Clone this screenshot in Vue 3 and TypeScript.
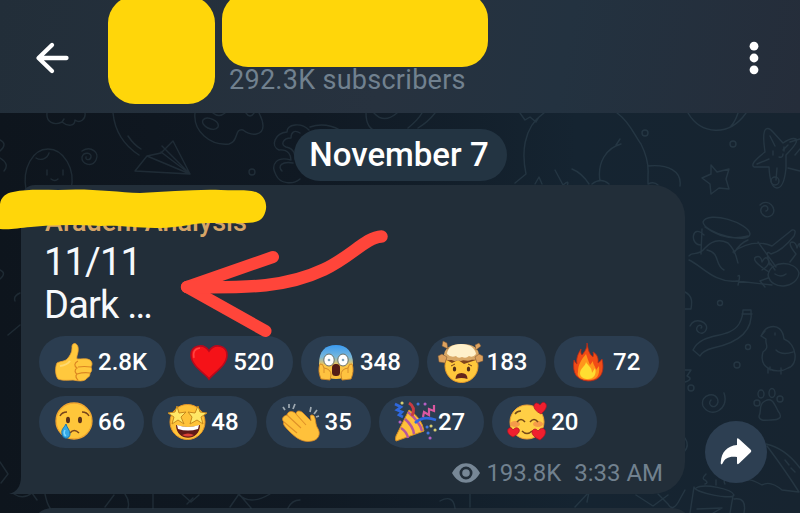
<script setup lang="ts">
interface Reaction {
  kind: string
  count: string
}

const reactionRows: Reaction[][] = [
  [
    { kind: 'thumb', count: '2.8K' },
    { kind: 'heart', count: '520' },
    { kind: 'scream', count: '348' },
    { kind: 'mindblown', count: '183' },
    { kind: 'fire', count: '72' },
  ],
  [
    { kind: 'cry', count: '66' },
    { kind: 'starstruck', count: '48' },
    { kind: 'clap', count: '35' },
    { kind: 'party', count: '27' },
    { kind: 'love', count: '20' },
  ],
]
</script>

<template>
  <div class="screen">
    <header class="topbar">
      <svg class="back" viewBox="0 0 36 34">
        <path d="M31.500 17H4M17 4 3.500 17 17 30" />
      </svg>
      <div class="avatar"></div>
      <div class="channel">
        <div class="channel-name"></div>
        <div class="subs">292.3K subscribers</div>
      </div>
      <svg class="menu" viewBox="0 0 12 34">
        <circle cx="6" cy="5.200" r="4.400" /><circle cx="6" cy="17" r="4.400" /><circle cx="6" cy="28.800" r="4.400" />
      </svg>
    </header>

    <main class="chat">
      <svg class="wallpaper" viewBox="0 113 800 400">
        <!-- cloud, egg and spiral -->
        <path d="M47 113c-1 9 7 13 15 9 6 5 13 4 13-2 5 4 11-1 10-7M62 122l2-3" />
        <path d="M26 190c-4-22 7-41 22-41s28 19 23 41M36 158c5 3 11 1 13-5M47 170v5M63 170v5M51 179q4 3 7 0" />
        <path d="M82 151c9-6 18 2 14 9-4 8-15 4-14-3 2-6 10-4 9 0-1 4-6 3-5 0" />
        <path d="M0 140q8 4 0 11M0 158q10 6 4 13" />
        <!-- balloon and paper plane -->
        <path d="M113 113c2 20 12 33 26 42M128 136q6 9 13 13M135 171l12-15 14-3 12-12 17 33zM147 156l43 18-29-22M162 146l28 28" />
        <!-- palette -->
        <path d="M195 113c-2 18 15 33 34 31 10-2 5-16 14-14 9 7 20 5 20-4 0-6-2-9-4-13M203 120c4-5 17 1 15 7-4 6-18-1-15-7M213 113q6 5 12 0M246 113q4 6 8 0" />
        <circle cx="252" cy="172" r="3" />
        <path d="M309 130c-8-8-22-6-22 2-12 1-17 14-8 18 10-1 12 6 12 10-14-4-21 4-15 15 4 9 17 10 24 4M300 133c-6-4-9 0-9 5-8 0-11 7-5 9 9 2 9 8 9 12M293 163c-11-2-16 3-11 8M310 127q15-5 30 3" />
        <path d="M366 113c0 10 3 16 10 18M374 113c8 9 16 6 23 0M418 128q10-6 17-15M408 128q10-8 14-15" />
        <!-- whale -->
        <path d="M520 113l5 7 5-3 6 5 3-5 5-4M544 113c-22 15-22 42-18 61l-11 9M617 113c12 8 18 23 24 31 5 10 8 19 7 31v9M535 184l4-7 3 7M555 170l8 15q7-6 4 1M572 169q10 4 17 15M592 184q9-7 17 0M621 144c-15 4-24 19-21 37M616 145l4-6M648 166c20-2 34 5 32 20M648 184q6-3 10 1" />
        <circle cx="645" cy="133" r="3" /><circle cx="733" cy="144" r="3" />
        <path d="M688 113c13 22 41 24 58 0M738 113q-3 9-7 13" />
        <!-- star fish and small star -->
        <path d="M766 129q3-2 7 3l10 11q9-6 13-4 3 3-10 16l0 13q-2 20-9 20-7 0-8-21l-15 0q-5-3 11-15-3-20 1-23zM770 136l5 10M788 145l-5 5M757 164l12-5M776 180l1-12M790 142l10-3M788 168l12 3M795 155l5-6" />
        <path d="M773 151v4M784 147v4M779 157q4 1 4-3" />
        <path d="M711 165l6 7 12-3-3 10 3 10-10-1-8 6-1-10-8-6 9-4z" />
        <circle cx="775" cy="181" r="4" />
        <!-- right spirals -->
        <path d="M760 205c8-8 18 4 12 10-6 5-14-2-10-8 5-4 8 3 4 4M690 326c4-10 20-4 16 4-3 7-13 1-8-4 3-2 5 1 3 2M724 393c6 17-14 26-21 13-4-12 15-16 15-4-2 9-12 3-7-2" />
        <!-- drum and dog -->
        <path d="M703 222c5-12 46 1 47 12-1 11-46-1-47-12M705 227q20 15 43 9M702 229l-1 25M704 235c-12-12-15 10-3 10M748 240q-8 3-14 13M689 256c3-5 9 1 16-8 8-9 17-8 23-5 9 9 8 15 10 20M689 260c12 5 26 24 48 21l35 4M707 250c14 3 7 15 17 20M733 252q20-14 39-6l20-16q5-1 2 6-12 15-23 18-7-6-1 11M758 242l18 25M738 276q3-3 0 9" />
        <path d="M768 275c3-16 28-14 31-2-2 16-28 18-31 2M775 270l-5-7M769 272q-19-12-13-15 5-2 6 5 4-8 7-1 0 5-7 9M790 262l6-8q-9-11-4-12 4 0 5 6 3-8 3-1M775 274q6 4 11 0M768 278l-8 3 5 6" />
        <!-- ribbon -->
        <path d="M743 310l8 0c3 25-19 34-38 38-8 2-11 4-13 8l-7-6c9-19 36-10 46-26q4-7 4-14zM742 314h10" />
        <circle cx="720" cy="303" r="2.500" /><circle cx="748" cy="347" r="2.500" /><circle cx="737" cy="365" r="3" /><circle cx="691" cy="388" r="3" />
        <!-- chick -->
        <path d="M765 331l-4 5 5 3c-1 6 4 8-3 13-5 17 14 23 25 16 11-3 9-24-4-29-1-9-6-14-14-12-6 1-7 6-9 9M776 350c6 6 14 3 17 2M770 370v-3M768 368v5M781 368v6M775 333v2" />
        <!-- paw -->
        <path d="M765 401c-7 4-3 10-6 15 0 6 8 4 12 4 9 0 12-3 7-9-4-8-6-14-13-10z" />
        <circle cx="757" cy="403" r="3" /><ellipse cx="761" cy="394" rx="3" ry="4" /><ellipse cx="772" cy="393" rx="3" ry="4.500" /><circle cx="780" cy="399" r="3" />
        <path d="M685 292c8 4 7 11 6 17h-6M685 370h6l-4 6q7 3-2 6M685 438q5 8-1 14M685 490l-5 9q-7 14-12 5l-10-10" />
        <!-- umbrella -->
        <path d="M766 444q19 4 34 24M767 446q18 24 32 46l-17-2q-12-10-20-5-11-6-14-5-10-5-14-4M785 460l4 5M791 468l4 4" />
        <!-- mug -->
        <path d="M696 488c8-5 36 1 38 7-2 5-39-2-40-8l-4 26M733 496l-3 17M734 499q13-2 10 14M697 509l25-1-9 5M706 474q-5 5-1 6 4 3 0 4M716 480v5M726 477q-3 4-1 7" />
        <!-- left and bottom edges -->
        <path d="M0 270q7 3 0 9M20 293q-7 3-5 8M8 335l12-10M0 462l8 12-7 9M14 494q9 6 18-1l5 7M45 494q2 10 5 14M125 494q5 7 3 14M153 494v14M105 507l9-12M182 494l9 8 8-7M193 498l-6 6M230 507l9-13 12 14M238 494q12 12 32 0M288 508q4-8 12-8M440 501q13-7 15 7M470 494v13M575 507l14-15-2 10M636 495l17 11 15-11" />
      </svg>

      <div class="date">November 7</div>

      <section class="message">
        <svg class="tail" viewBox="0 0 16 34"><path d="M12 0v16Q12 31 0 34h16V0z" /></svg>
        <div class="author">Aradeni Analysis</div>
        <div class="body">11/11<br />Dark …</div>
        <div class="reactions">
          <div v-for="(row, r) in reactionRows" :key="r" class="row">
            <div v-for="item in row" :key="item.kind" class="chip" :class="item.kind">
              <svg v-if="item.kind === 'thumb'" class="emoji" viewBox="0 0 40 40">
                <path d="M3 21C6 19 11 20 14 16c4-5 4-8 4-12 1-4 5-3 6 1 1 6-2 9-1 12 5 0 10-1 13 1 3 3 2 5 1 7 1 3 1 4-1 6 0 3-1 4-3 5-2 4-9 3-14 2-5 0-10 1-15-1C1 33 1 25 3 21z" fill="#ffc83d" stroke="#eda12e" stroke-width=".8" />
                <path d="M24 19c-4 2-4 5-1 7-3 2-2 5 0 6-2 2-1 4 1 6M24 25q6-1 13 0M23 32q7-2 13-1" fill="none" stroke="#dc8722" stroke-width="1.200" /><path d="M6 24q7-1 10-5" fill="none" stroke="#ffda70" stroke-width="2" />
              </svg>
              <svg v-else-if="item.kind === 'heart'" class="emoji" viewBox="0 0 40 40">
                <path d="M20 37C17 32 2 24 2 13 2 4 14 0 20 9 26 0 38 4 38 13c0 11-14 18-18 24z" fill="#f51218" stroke="#b8091c" stroke-width="1.600" /><path d="M5 16Q3 7 11 6" fill="none" stroke="#ff4440" stroke-width="1.500" />
              </svg>
              <svg v-else-if="item.kind === 'scream'" class="emoji" viewBox="0 0 40 40">
                <defs><linearGradient id="cold" x2="0" y2="1"><stop stop-color="#3a9bf2" /><stop offset=".35" stop-color="#78b7db" /><stop offset=".6" stop-color="#fbc647" /><stop offset="1" stop-color="#fbbc37" /></linearGradient></defs>
                <path d="M3 22C3 9 9 3 20 3s17 7 17 19c0 10-7 15-17 15S3 32 3 22z" fill="url(#cold)" />
                <ellipse cx="13" cy="18" rx="5.200" ry="6" fill="#fff" stroke="#6a7169" /><ellipse cx="27" cy="18" rx="5.200" ry="6" fill="#fff" stroke="#6a7169" /><circle cx="13" cy="18" r="1.300" fill="#7fa3b8" /><circle cx="27" cy="18" r="1.300" fill="#7fa3b8" />
                <rect x="16" y="22" width="8" height="12" rx="3.500" fill="#551c16" />
                <path d="M4 22q3-1 4 4 7 1 7 7l-1 5-9-1c-2-5-3-10-1-15zM36 22q-3-1-4 4-7 1-7 7l1 5 9-1c2-5 3-10 1-15z" fill="#ffc340" stroke="#cf8426" stroke-width=".9" /><path d="M8 26v5M32 26v5" stroke="#dc912b" />
              </svg>
              <svg v-else-if="item.kind === 'mindblown'" class="emoji" viewBox="0 0 40 40">
                <circle cx="19.500" cy="24" r="16.500" fill="#ffc83c" stroke="#e99a28" />
                <path d="M3 17l7 4 6-3 6 4 6-2 9-3-5-6H7z" fill="#80451d" /><path d="M2 16C1 6 9 2 20 2s18 4 17 14c-3 3-6 1-8 2-4 2-7-1-10 1-4-1-6 1-9-1-3 0-5 1-8-2z" fill="#d9a866" /><path d="M5 12Q6 2 19 2q13 0 15 10-3 4-7 2-3 3-7 1-4 2-6-1-5 2-9-2z" fill="#fff1cb" />
                <path d="M5 1l-4-2-1 5 6 3zM33 3l4-2 2 3-5 4zM0 12l-4 2 1 6 6 1 2-6zM37 12l4 2 0 5-6 2-2-6z" fill="#dda25e" stroke="#765131" stroke-width=".5" />
                <ellipse cx="12.500" cy="27" rx="1.700" ry="2.500" fill="#542f19" /><ellipse cx="26.500" cy="27" rx="1.700" ry="2.500" fill="#542f19" /><path d="M9 24l4-2M30 24l-4-2" stroke="#79451e" /><path d="M13.500 37q0-6 6-6t6 6q-6-2-12 0z" fill="#64261b" />
              </svg>
              <svg v-else-if="item.kind === 'fire'" class="emoji" viewBox="0 0 40 40">
                <path d="M18 1c0 5-1 7-5 12-2-2-1-5-1-6-3 5-5 9-4 15-2-1-2-3-3-4-2 14 3 20 14 21 13 0 17-9 14-22-1 1-2 3-4 4 1-7-3-10-5-11 1 2 0 4 0 5-4-3-5-8-6-14z" fill="#f14c16" stroke="#ba2b17" stroke-width=".8" /><path d="M17 12c-5 6-8 11-8 18-2 5 4 8 10 8 9 0 12-4 11-14l-3 4c-1-5-3-5-3-9l-3 4q-2-5-4-11z" fill="#ff951b" /><path d="M17 20c-1 5-5 5-6 11 0 4 4 6 8 6 6 0 9-5 7-11l-3 5c0-6-4-7-6-11z" fill="#ffdd31" />
              </svg>
              <svg v-else-if="item.kind === 'cry'" class="emoji" viewBox="0 0 40 40">
                <circle cx="20" cy="19" r="18" fill="#ffc63a" stroke="#f0a52f" stroke-width="1.300" /><ellipse cx="14" cy="18" rx="2" ry="3.200" fill="#5b3219" /><ellipse cx="26" cy="18" rx="2" ry="3.200" fill="#5b3219" /><path d="M6 14q2-4 7-4M28 10q5 0 7 4M16 31q4-5 9 0" fill="none" stroke="#78451c" stroke-width="1.500" /><path d="M12 22c-2 4-5 5-4 10 1 6 8 5 8 0 0-4-3-6-4-10z" fill="#35a9e6" stroke="#1976ad" /><path d="M11 28q-2 4 1 6" fill="none" stroke="#7bd9ff" stroke-width="1.500" />
              </svg>
              <svg v-else-if="item.kind === 'starstruck'" class="emoji" viewBox="0 0 40 40">
                <circle cx="20.500" cy="20" r="17.500" fill="#ffc339" stroke="#e99726" /><path d="M9 23q12 4 24 0c0 17-24 17-24 0z" fill="#601a18" /><path d="M10 23q11 4 22 0l-1 4q-10 3-20 0z" fill="#fff" /><path d="M15 33q6-3 12 0-6 3-12 0z" fill="#dc4136" />
                <path d="M10 4l2 7 7-1-5 5 3 7-6-4-6 4 2-7-6-4 7-1zM31 4l2 6 7 1-6 4 2 7-6-4-7 4 2-7-4-5 7 1z" fill="#ffe766" stroke="#c8891d" stroke-width="1" />
              </svg>
              <svg v-else-if="item.kind === 'clap'" class="emoji" viewBox="0 0 40 40">
                <path d="M6 13c1-5 7-4 9-1 0-4 5-4 8 0l7 7c0-3-2-6 1-6 4 0 3 8 5 12 5 7 1 13-5 14-9 2-16-3-22-9-4-4-8-8-6-10-3-3-1-6 3-7z" fill="#ffc13b" stroke="#db8924" stroke-width=".8" /><path d="M6 13l14 13M3 20l13 11M15 12l10 11" fill="none" stroke="#df9129" stroke-width="1.100" /><path d="M4 8L2 5M8 6V2M12 7l2-5M29 10l1-5M33 12l3-4M35 15l3-1" stroke="#9faab2" stroke-width="1.700" />
              </svg>
              <svg v-else-if="item.kind === 'party'" class="emoji party-emoji" viewBox="0 0 44 40">
                <path d="M15 8q13 8 15 21L2 39q-1-2 0-5z" fill="#ffc13b" stroke="#d88e25" /><path d="M11 17q8 7 9 15M7 26q6 4 7 10M14 10q12 10 14 19" fill="none" stroke="#b6579c" stroke-width="2.500" /><path d="M1 2l6 3-4 3 5 2-3 3 4 2M21 21q8-8 21-3" fill="none" stroke="#2f68de" stroke-width="2.600" /><path d="M15 1q7 4 3 13" fill="none" stroke="#c93c42" stroke-width="3" /><path d="M29 15l1-5 5 3 0-6 5 2 0-6" fill="none" stroke="#db58a0" stroke-width="2.200" /><g stroke-width="3" stroke-linecap="round"><path d="M8 1h.1M37 24h.1M41 28h.1" stroke="#d6ce73" /><path d="M31 2h.1M6 20h.1M36 36h.1" stroke="#b35fc3" /><path d="M24 2h.1M33 25h.1M34 31h.1" stroke="#3f76de" /></g>
              </svg>
              <svg v-else class="emoji" viewBox="0 0 40 40">
                <circle cx="20" cy="20" r="17" fill="#ffcf45" stroke="#f2a033" /><ellipse cx="8" cy="22" rx="5" ry="3" fill="#f59b49" /><ellipse cx="31" cy="22" rx="5" ry="3" fill="#f59b49" /><path d="M10 20q4-5 8 0M23 20q4-5 8 0M8 12q2-3 6-3M15 29q5 5 10 0" fill="none" stroke="#754a19" stroke-width="1.500" />
                <path d="M34 12q-8-4-7-9 2-4 6 0 3-5 6-1 2 4-5 10zM6 35Q-1 32 1 27q3-3 5 1 3-4 6-1 2 4-6 8zM33 38q-9-4-8-9 3-4 6 0 4-5 7-1 2 5-5 10z" fill="#f01f2e" stroke="#ad1020" stroke-width=".7" />
              </svg>
              <span>{{ item.count }}</span>
            </div>
          </div>
        </div>
        <div class="meta">
          <svg class="eye" viewBox="0 0 28 20"><path fill-rule="evenodd" d="M0 10C7-3 21-3 28 10 21 23 7 23 0 10zM14 3.500a6.500 6.500 0 1 0 0 13 6.500 6.500 0 0 0 0-13z" /><circle cx="14" cy="10" r="3.800" /></svg>
          <span class="views">193.8K</span>
          <span class="time">3:33 AM</span>
        </div>
      </section>
      <div class="next-message"></div>

      <button class="share" aria-label="Share">
        <svg viewBox="0 0 32 28"><path d="M17 1.500Q17-.5 19 1L30.500 11.500Q32 13 30.500 14.500L19 25.500Q17 27 17 25v-6C9 18 5 20 2.500 25.500 1.500 27 .5 26.500.8 24 1.500 14 7 8 17 7z" /></svg>
      </button>
    </main>

    <svg class="marker" viewBox="0 0 800 513">
      <path class="brush" d="M0 204C1 197 6 193 13 192 27 189 42 190 58 190c31-2 57 2 82 3 27-1 55-4 81-3 14 1 29-1 37 3 8 4 11 15 5 24-4 6-12 6-21 6-17 1-31-1-47 1-12 2-24 4-40 4-20 0-36-3-54-2-30-2-52-1-70 1-15 1-24 4-36 1-5-2-8-4-8-7z" />
      <path class="arrow" d="M273 257 187 287 265.500 331" />
      <path class="arrow shaft" d="M381.500 236.500C366 237 351 257 324 269.500 287 287 251 288 187 287" />
    </svg>
  </div>
</template>

<style>
body {
  overflow: hidden;
  background: #111b25;
}
</style>

<style scoped>
.screen {
  position: relative;
  display: flex;
  flex-direction: column;
  width: 800px;
  height: 513px;
  overflow: hidden;
  font-family: Roboto, "Liberation Sans", sans-serif;
}
.topbar {
  box-sizing: border-box;
  display: flex;
  flex: none;
  align-items: flex-start;
  height: 113px;
  padding-left: 35px;
  background: linear-gradient(100deg, #222e39 0%, #27323f 48%, #233240 70%, #252d3a 100%);
}
.back {
  width: 36px;
  height: 34px;
  margin-top: 41px;
  fill: none;
  stroke: #fff;
  stroke-width: 4.300;
  stroke-linecap: round;
  stroke-linejoin: round;
}
.avatar {
  width: 107px;
  height: 108px;
  margin: -4px 0 0 36.500px;
  border-radius: 27px;
  background: #ffd60a;
}
.channel {
  width: 266px;
  margin: -7px 0 0 7px;
}
.channel-name {
  height: 74px;
  border-radius: 26px;
  background: #ffd60a;
}
.subs {
  margin: -3px 0 0 7.500px;
  color: #71818f;
  font-size: 27px;
  line-height: 32px;
  letter-spacing: 0.28px;
  white-space: nowrap;
}
.menu {
  width: 12px;
  height: 34px;
  margin: 41px 40px 0 auto;
  fill: #fff;
}
.chat {
  position: relative;
  flex: 1;
  min-height: 0;
  background: linear-gradient(90deg, #0e151d 0%, #101923 38%, #152431 72%, #172430 100%);
}
.wallpaper {
  position: absolute;
  inset: 0;
  width: 800px;
  height: 400px;
  fill: none;
  stroke: #607e8c;
  stroke-width: 1.400;
  stroke-linecap: round;
  stroke-linejoin: round;
  opacity: 0.2;
}
.date {
  position: relative;
  width: 213px;
  height: 52px;
  margin: 0 auto;
  top: 16px;
  border-radius: 26px;
  background: #233442;
  color: #fff;
  font-size: 33px;
  font-weight: 500;
  line-height: 52px;
  text-align: center;
  text-indent: -2px;
}
.message {
  position: relative;
  box-sizing: border-box;
  width: 664px;
  height: 309px;
  margin: 20px 0 0 21px;
  padding: 23px 18px 0;
  border-radius: 14px 32px 32px 0;
  background: #222e39;
}
.tail {
  position: absolute;
  bottom: 0;
  left: -12px;
  width: 16px;
  height: 34px;
  fill: #222e39;
}
.author {
  margin-left: 6px;
  color: #d6a567;
  font-size: 27px;
  font-weight: 500;
  line-height: 28px;
}
.body {
  margin: 5px 0 0 5px;
  color: #f6f9fc;
  font-size: 38px;
  line-height: 43px;
  letter-spacing: -0.8px;
}
.reactions {
  display: flex;
  flex-direction: column;
  gap: 8px;
  margin-top: 9px;
}
.row {
  display: flex;
  gap: 8.300px;
}
.chip {
  box-sizing: border-box;
  display: flex;
  align-items: center;
  width: 105px;
  height: 52px;
  padding-left: 15px;
  border-radius: 26px;
  background: #2b3d50;
  color: #fff;
  font-size: 24px;
  font-weight: 500;
}
.thumb {
  width: 127px;
}
.heart,
.scream,
.mindblown {
  width: 118.300px;
}
.emoji {
  flex: none;
  width: 40px;
  height: 40px;
  margin-right: 4px;
  overflow: visible;
}
.party-emoji {
  width: 44px;
  margin-right: 0;
}
.meta {
  display: flex;
  align-items: center;
  justify-content: flex-end;
  height: 30px;
  margin: 10px 4px 0 0;
  color: #71818f;
  font-size: 24px;
}
.eye {
  width: 28px;
  height: 20px;
  margin-right: 6px;
  fill: #778796;
}
.views {
  letter-spacing: -0.1px;
}
.time {
  margin-left: 13px;
}
.next-message {
  width: 660px;
  height: 20px;
  margin: 14px 0 0 32px;
  border-radius: 26px 26px 0 0;
  background: #222e39;
}
.share {
  position: absolute;
  right: 33px;
  bottom: 30.500px;
  display: flex;
  align-items: center;
  justify-content: center;
  width: 62px;
  height: 62px;
  padding: 0;
  border: 0;
  border-radius: 50%;
  background: #2d3f52;
}
.share svg {
  width: 32px;
  height: 28px;
  fill: #fff;
}
.marker {
  position: absolute;
  inset: 0;
  width: 800px;
  height: 513px;
  pointer-events: none;
}
.brush {
  fill: #ffd60a;
}
.arrow {
  fill: none;
  stroke: #ff453a;
  stroke-width: 12;
  stroke-linecap: round;
  stroke-linejoin: round;
}
.shaft {
  stroke-width: 12.500;
}
</style>
